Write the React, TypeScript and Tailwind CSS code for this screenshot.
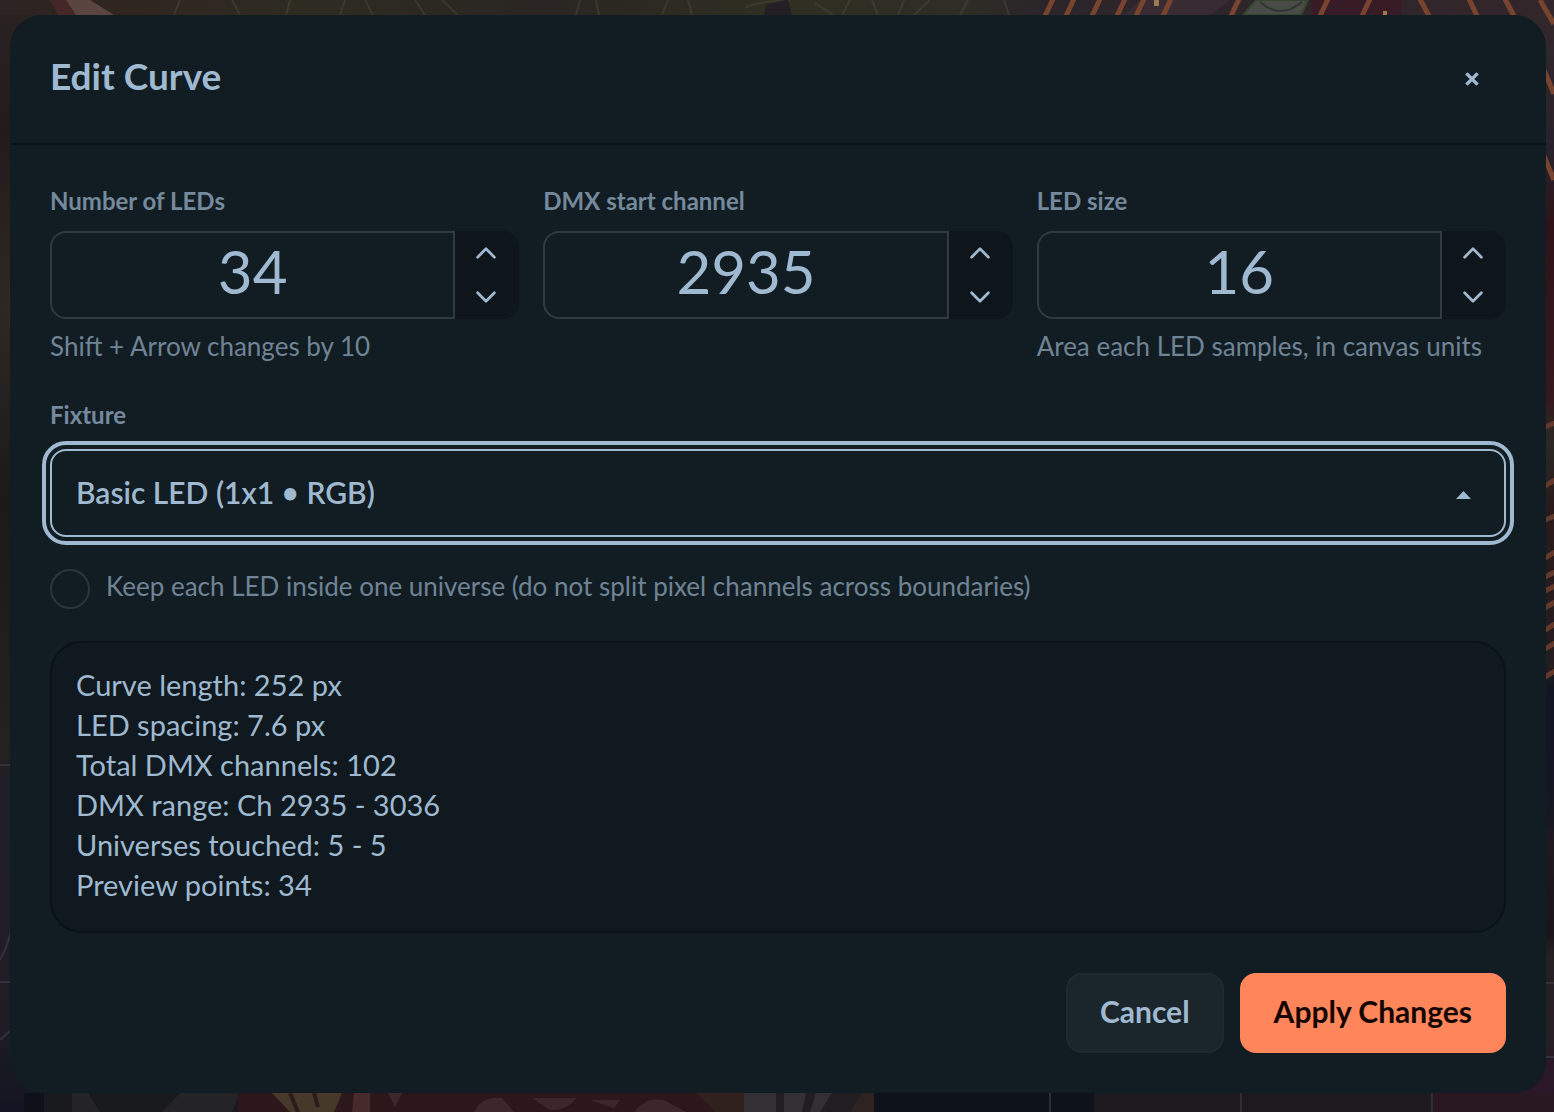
import { useState } from "react";

type StepperProps = {
  id: string;
  label: string;
  initial: number;
  hint?: string;
};

const summary = [
  "Curve length: 252 px",
  "LED spacing: 7.6 px",
  "Total DMX channels: 102",
  "DMX range: Ch 2935 - 3036",
  "Universes touched: 5 - 5",
  "Preview points: 34"
];

function Chevron({ up }: { up?: boolean }) {
  return (
    <svg width="20" height="12" viewBox="0 0 20 12" fill="none" stroke="currentColor" strokeWidth="2.7" strokeLinecap="round" strokeLinejoin="round" aria-hidden="true">
      <path d={up ? "M1.6 10.2 10 1.8 18.4 10.2" : "M1.6 1.8 10 10.2 18.4 1.8"} />
    </svg>
  );
}

function Stepper({ id, label, initial, hint }: StepperProps) {
  const [value, setValue] = useState(initial);

  // Shift jumps by 10
  function handleKeyDown(e: React.KeyboardEvent<HTMLInputElement>) {
    if (e.key !== "ArrowUp" && e.key !== "ArrowDown") return;
    e.preventDefault();
    const step = e.shiftKey ? 10 : 1;
    setValue(v => Math.max(1, e.key === "ArrowUp" ? v + step : v - step));
  }

  return (
    <div className="min-w-0">
      <label htmlFor={id} className="block mb-3.5 text-[24px] leading-8 font-bold text-[#758a9c]">{label}</label>
      <div className="flex h-[88px]">
        <input
          id={id}
          inputMode="numeric"
          className="min-w-0 flex-1 rounded-l-2xl border-2 border-[#2f3a42] bg-transparent pb-2 text-center text-[60px] leading-[72px] outline-none"
          value={value}
          onChange={e => setValue(Number(e.target.value) || 0)}
          onKeyDown={handleKeyDown}
        />
        <div className="flex w-16 flex-col overflow-hidden rounded-r-2xl bg-[#0f161b]">
          <button type="button" aria-label={`Increase ${label}`} className="flex flex-1 items-center justify-center pr-0.5" onClick={() => setValue(v => v + 1)}>
            <Chevron up />
          </button>
          <button type="button" aria-label={`Decrease ${label}`} className="flex flex-1 items-center justify-center pr-0.5" onClick={() => setValue(v => Math.max(1, v - 1))}>
            <Chevron />
          </button>
        </div>
      </div>
      {hint && <p className="mt-2 text-[26px] leading-[38px] text-[#6f8495] whitespace-nowrap">{hint}</p>}
    </div>
  );
}

// dimmed stage artwork behind the dialog
function Backdrop() {
  return (
    <svg className="absolute inset-0 h-full w-full" viewBox="0 0 1554 1112" preserveAspectRatio="none" aria-hidden="true">
      <defs>
        <linearGradient id="ground" x2="1">
          <stop offset="0" stopColor="#2c2423" />
          <stop offset="0.07" stopColor="#30251f" />
          <stop offset="0.2" stopColor="#2e2c22" />
          <stop offset="0.35" stopColor="#2a2522" />
          <stop offset="0.5" stopColor="#2f2f22" />
          <stop offset="0.62" stopColor="#2e2d26" />
          <stop offset="0.67" stopColor="#2b2529" />
          <stop offset="1" stopColor="#33262a" />
        </linearGradient>
        <linearGradient id="leftWall" y2="1" x2="0">
          <stop offset="0" stopColor="#2b2322" />
          <stop offset="0.12" stopColor="#231b1b" />
          <stop offset="0.28" stopColor="#2d2825" />
          <stop offset="0.45" stopColor="#1d1919" />
          <stop offset="0.68" stopColor="#252120" />
          <stop offset="0.7" stopColor="#201e26" />
          <stop offset="0.92" stopColor="#1f1c24" />
          <stop offset="1" stopColor="#121521" />
        </linearGradient>
        <linearGradient id="rightWall" y2="1" x2="0">
          <stop offset="0" stopColor="#33292c" />
          <stop offset="0.14" stopColor="#29212a" />
          <stop offset="0.2" stopColor="#2e1418" />
          <stop offset="0.36" stopColor="#341a1d" />
          <stop offset="0.4" stopColor="#2b2924" />
          <stop offset="0.46" stopColor="#2a191b" />
          <stop offset="0.6" stopColor="#241c1f" />
          <stop offset="0.62" stopColor="#111622" />
          <stop offset="0.72" stopColor="#151723" />
          <stop offset="0.76" stopColor="#1e1a20" />
          <stop offset="0.84" stopColor="#18161a" />
          <stop offset="0.86" stopColor="#272023" />
          <stop offset="0.94" stopColor="#261e24" />
          <stop offset="0.96" stopColor="#2a1729" />
          <stop offset="1" stopColor="#2a1624" />
        </linearGradient>
      </defs>

      <rect width="1554" height="1112" fill="#1d1a1f" />
      <rect width="60" height="1112" fill="url(#leftWall)" />
      <rect x="1494" width="60" height="1112" fill="url(#rightWall)" />
      <g stroke="#33323a" strokeWidth="2" fill="none">
        <path d="M0 765H12M0 982H12M0 960Q6 950 12 928M0 1040Q6 1034 12 1030M1546 983h8M1546 1057h8" />
      </g>

      {/* top strip */}
      <rect width="1554" height="15" fill="url(#ground)" />
      <path d="M50 0H66L76 15H58z" fill="#452727" />
      <path d="M66 0H90L114 15H76z" fill="#5a4540" />
      <g stroke="#444535" strokeOpacity="0.6" strokeWidth="2" fill="none">
        <path d="M180 0l-6 15M232 0l8 15M290 0l-4 15M345 0l-5 15M365 0l8 15M415 0l10 15M442 0l16 15M580 0l-4 15M596 0l3 15M668 0l-6 15M688 0l4 15M745 8Q760 0 790 1M815 3l18 12M850 0l-8 15M872 0l6 15M904 0l-6 15M930 0l-16 15M968 0l-8 15M1004 0l5 15" />
      </g>
      <path d="M766 5Q782 0 788 0L792 15H764z" fill="#241f24" />
      <path d="M1140 0h90l-20 15h-86z" fill="#392b34" />
      <path d="M1256 0h52l-7 15h-58z" fill="#494b47" stroke="#35452f" strokeWidth="2" />
      <path d="M1260 2q20 18 42 0" fill="none" stroke="#333533" strokeWidth="2" />
      <path d="M1312 0h90v15h-90z" fill="#371c26" />
      <g stroke="#79442f" strokeWidth="5">
        <path d="M1053 -1l-8 17M1074 -1l-8 17M1100 -1l-8 17M1125 -1l-8 17M1144 -1l-8 17M1171 -1l-8 17M1239 -1l-8 17M1328 -1l-8 17M1370 -1l-8 17M1420 -1l9 17M1469 -1l8 17M1505 -1l9 17M1540 0l14 24M1544 70l10 24M1544 156l10 24" />
      </g>
      <g stroke="#63392b" strokeWidth="5">
        <path d="M1545 427l10-4M1545 486l10-6M1545 520l10-4M1545 558l10-6M1545 577l10-5M1545 591l10-5M1545 608l10-6M1545 630l10-6M1545 649l10-6M1545 677l10-6" />
      </g>
      <path d="M1154 0h5v6h-5zM1383 11h4v4h-4z" fill="#9a7b4d" />

      {/* bottom strip */}
      <rect x="24" y="1093" width="24" height="19" fill="#0f111a" />
      <rect x="44" y="1093" width="200" height="19" fill="#191a1d" />
      <path d="M72 1093h16l12 19H72zM180 1093h60l-8 19h-70z" fill="#242326" />
      <rect x="238" y="1093" width="490" height="19" fill="#2c181b" />
      <path d="M272 1093h70l-8 19h-44z" fill="#463929" />
      <path d="M290 1093l8 19M314 1093l4 14" stroke="#2a1c1c" strokeWidth="4" />
      <path d="M354 1093h16v19h-18z" fill="#472b2b" />
      <path d="M388 1093h14l-7 14zM474 1112q8-16 28-14l12 14zM532 1098h44q-8 12-26 12zM590 1100h30l-6 8zM634 1112q12-16 30-12l22 12z" fill="#3d272b" />
      <path d="M696 1093h48v19h-28z" fill="#30211f" />
      <rect x="744" y="1093" width="144" height="19" fill="#211d20" />
      <path d="M744 1093h32v19h-32zM784 1093h22l-4 19h-18zM816 1093h16l-12 19h-10z" fill="#323035" />
      <path d="M862 1093h22l-10 19h-24z" fill="#2e2320" />
      <rect x="874" y="1093" width="220" height="19" fill="#0e121b" />
      <rect x="1094" y="1093" width="340" height="19" fill="#1d1a1f" />
      <rect x="1434" y="1093" width="120" height="19" fill="#29181f" />
      <path d="M1050 1093v19M1241 1093v19M1432 1093v19" stroke="#322d34" strokeWidth="2" />
    </svg>
  );
}

export default function App() {
  const [keepInside, setKeepInside] = useState(false);

  return (
    <main className="relative min-h-screen pt-[15px] pb-[19px] pl-[10px] pr-2 font-['Lato',sans-serif] text-[#9fb9d0]">
      <Backdrop />
      <form role="dialog" aria-labelledby="dialog-title" className="relative rounded-[32px] bg-[#121c23]" onSubmit={e => e.preventDefault()}>
        <header className="flex items-center justify-between border-b-2 border-[#091319] px-10 py-8">
          <h1 id="dialog-title" className="pb-1.5 text-[37px] leading-10 font-bold">Edit Curve</h1>
          <button type="button" aria-label="Close" className="flex h-16 w-[68px] items-center justify-center">
            <svg width="14" height="14" viewBox="0 0 14 14" stroke="currentColor" strokeWidth="3.4" aria-hidden="true">
              <path d="M1.4 1.4 12.6 12.6M12.6 1.4 1.4 12.6" />
            </svg>
          </button>
        </header>
        <div className="p-10">
          <div className="grid grid-cols-3 gap-6">
            <Stepper id="led-count" label="Number of LEDs" initial={34} hint="Shift + Arrow changes by 10" />
            <Stepper id="dmx-start" label="DMX start channel" initial={2935} />
            <Stepper id="led-size" label="LED size" initial={16} hint="Area each LED samples, in canvas units" />
          </div>

          <label htmlFor="fixture" className="mt-[34px] mb-[18px] block text-[24px] leading-8 font-bold text-[#758a9c]">Fixture</label>
          <div className="relative">
            <select id="fixture" className="block h-[88px] w-full appearance-none rounded-2xl border-2 border-[#9fb9d0] bg-transparent px-6 pb-0.5 text-[30px] font-semibold outline-4 outline-offset-4 outline-[#9fb9d0]">
              <option>Basic LED (1x1 • RGB)</option>
            </select>
            <svg className="pointer-events-none absolute right-[35px] top-[42px]" width="15" height="8" viewBox="0 0 15 8" fill="currentColor" aria-hidden="true">
              <path d="M7.5 0 15 8H0z" />
            </svg>
          </div>

          <label className="mt-8 flex items-start gap-4 text-[26px] leading-[34px] text-[#6f8495]">
            <input
              type="checkbox"
              className="size-10 shrink-0 appearance-none rounded-full border-2 border-[#2a363e] checked:bg-[#9fb9d0]"
              checked={keepInside}
              onChange={e => setKeepInside(e.target.checked)}
            />
            Keep each LED inside one universe (do not split pixel channels across boundaries)
          </label>

          <ul className="mt-8 rounded-[32px] border-2 border-[#091319] bg-[#0f191f] px-6 pt-[22px] pb-[26px] text-[29px] leading-10">
            {summary.map(line => (
              <li key={line}>{line}</li>
            ))}
          </ul>

          <div className="mt-10 flex justify-end gap-4">
            <button type="button" className="h-20 rounded-2xl border-2 border-[#1f2a30] bg-[#1b262c] px-8 pb-1 text-[30px] font-bold">Cancel</button>
            <button type="submit" className="h-20 rounded-2xl bg-[#ff865b] px-[34px] pb-1 text-[30px] font-bold text-[#160603]">Apply Changes</button>
          </div>
        </div>
      </form>
    </main>
  );
}
